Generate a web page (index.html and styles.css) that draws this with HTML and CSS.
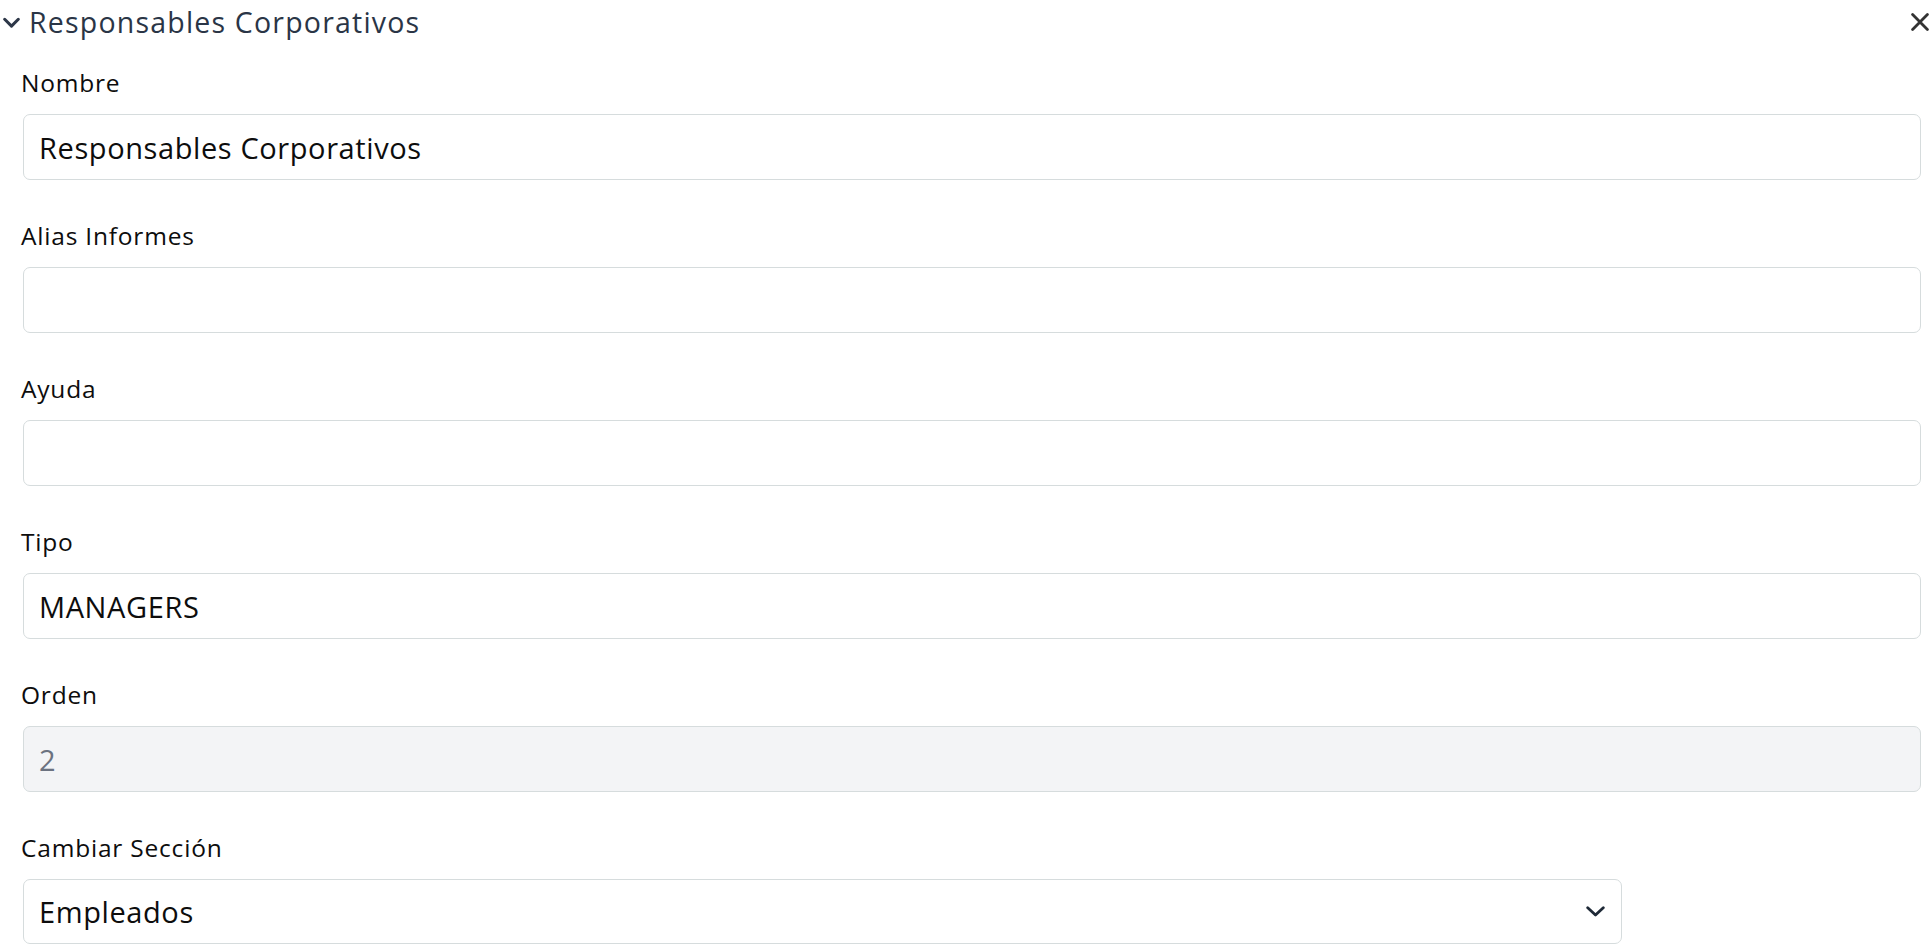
FILE: index.html
```html
<!DOCTYPE html>
<html lang="es">
<head>
<meta charset="utf-8">
<title>Responsables Corporativos</title>
<link rel="stylesheet" href="styles.css">
</head>
<body>
<div class="panel">
  <header class="panel-head">
    <button class="icon-btn toggle" type="button" aria-label="Contraer">
      <svg width="17" height="12" viewBox="0 0 17 12"><path d="M1.7 2.3 L8.5 9.1 L15.3 2.3" fill="none" stroke="#2d3748" stroke-width="3" stroke-linecap="round" stroke-linejoin="round"/></svg>
    </button>
    <h2 class="panel-title">Responsables Corporativos</h2>
    <button class="icon-btn close" type="button" aria-label="Cerrar">
      <svg width="18" height="18" viewBox="0 0 18 18"><path d="M1.6 1.6 L16.4 16.4 M16.4 1.6 L1.6 16.4" fill="none" stroke="#333333" stroke-width="2.8" stroke-linecap="round"/></svg>
    </button>
  </header>
  <form class="fields">
    <div class="field">
      <label class="field-label" for="f-nombre">Nombre</label>
      <input class="field-input" id="f-nombre" type="text" value="Responsables Corporativos">
    </div>
    <div class="field">
      <label class="field-label" for="f-alias">Alias Informes</label>
      <input class="field-input" id="f-alias" type="text" value="">
    </div>
    <div class="field">
      <label class="field-label" for="f-ayuda">Ayuda</label>
      <input class="field-input" id="f-ayuda" type="text" value="">
    </div>
    <div class="field">
      <label class="field-label" for="f-tipo">Tipo</label>
      <input class="field-input" id="f-tipo" type="text" value="MANAGERS">
    </div>
    <div class="field">
      <label class="field-label" for="f-orden">Orden</label>
      <input class="field-input" id="f-orden" type="text" value="2" disabled>
    </div>
    <div class="field">
      <label class="field-label" for="f-seccion">Cambiar Sección</label>
      <div class="select-wrap">
        <select class="field-input field-select" id="f-seccion">
          <option selected>Empleados</option>
        </select>
        <svg class="select-caret" width="19" height="11" viewBox="0 0 19 11"><path d="M1.7 1.7 L9.5 9.1 L17.3 1.7" fill="none" stroke="#1f2a37" stroke-width="2.8" stroke-linecap="round" stroke-linejoin="round"/></svg>
      </div>
    </div>
  </form>
</div>
</body>
</html>
```
FILE: styles.css
```css
html, body {
  margin: 0;
  padding: 0;
  background: #ffffff;
}

body {
  font-family: "Open Sans", "Liberation Sans", sans-serif;
  color: #111111;
}

.panel {
  width: 1930px;
}

.panel-head {
  display: flex;
  align-items: center;
  height: 44px;
  padding: 0 1px 0 3px;
  box-sizing: border-box;
}

.icon-btn {
  display: flex;
  align-items: center;
  justify-content: center;
  padding: 0;
  margin: 0;
  border: 0;
  background: transparent;
  cursor: pointer;
}

.toggle {
  width: 17px;
  height: 12px;
  margin-top: 1px;
  margin-right: 9px;
}

.close {
  width: 18px;
  height: 18px;
}

.panel-title {
  flex: 1;
  margin: 0;
  font-size: 28.5px;
  font-weight: 500;
  letter-spacing: 1.2px;
  color: #2a3546;
  line-height: 38px;
}

.fields {
  display: flex;
  flex-direction: column;
  gap: 39px;
  padding: 22px 9px 0 23px;
  margin: 0;
}

.field {
  display: flex;
  flex-direction: column;
}

.field-label {
  display: block;
  font-size: 24.5px;
  line-height: 34px;
  letter-spacing: 0.8px;
  margin: 0 0 14px -2px;
  color: #0d0d0d;
}

.field-input {
  display: block;
  width: 100%;
  height: 66px;
  box-sizing: border-box;
  margin: 0;
  padding: 0 15px;
  border: 1px solid #d6dcdd;
  border-radius: 7px;
  background: #ffffff;
  font-family: "Open Sans", "Liberation Sans", sans-serif;
  font-size: 29px;
  letter-spacing: 0.6px;
  color: #0d0d0d;
  outline: none;
}

.field-input:disabled {
  background: #f3f4f6;
  color: #6b7280;
  -webkit-text-fill-color: #6b7280;
  opacity: 1;
}

.select-wrap {
  position: relative;
  width: 1599px;
}

.field-select {
  -webkit-appearance: none;
  appearance: none;
  height: 65px;
  padding-right: 50px;
}

.select-caret {
  position: absolute;
  right: 17px;
  top: 27px;
  pointer-events: none;
}
```
